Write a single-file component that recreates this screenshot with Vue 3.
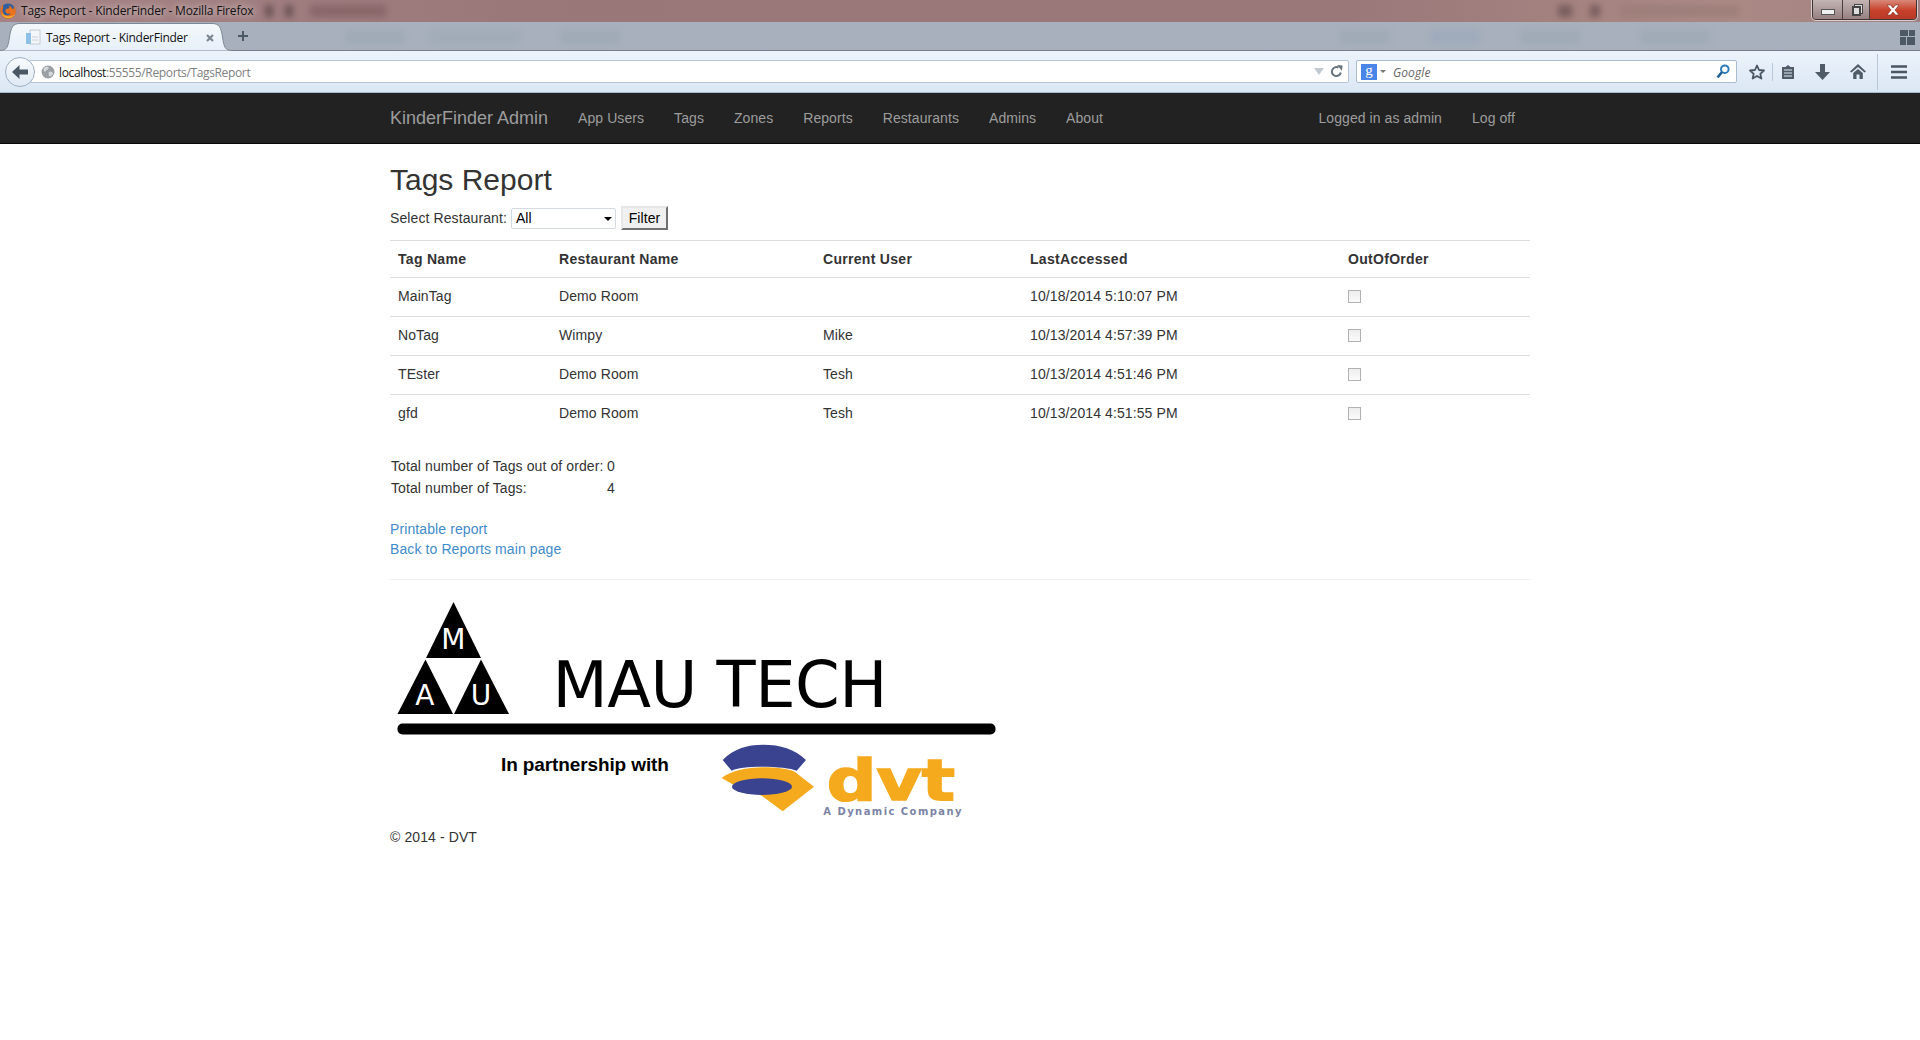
<script setup>
const navLinks = ['App Users', 'Tags', 'Zones', 'Reports', 'Restaurants', 'Admins', 'About']

const tags = [
  { name: 'MainTag', restaurant: 'Demo Room', user: '', accessed: '10/18/2014 5:10:07 PM' },
  { name: 'NoTag', restaurant: 'Wimpy', user: 'Mike', accessed: '10/13/2014 4:57:39 PM' },
  { name: 'TEster', restaurant: 'Demo Room', user: 'Tesh', accessed: '10/13/2014 4:51:46 PM' },
  { name: 'gfd', restaurant: 'Demo Room', user: 'Tesh', accessed: '10/13/2014 4:51:55 PM' },
]

// smudges of the windows showing through the aero glass
const titleBlurs = [
  { left: 265, width: 8, color: '#5f4a4c' },
  { left: 285, width: 8, color: '#5f4a4c' },
  { left: 310, width: 76, color: '#846365' },
  { left: 1558, width: 14, color: '#6f5556' },
  { left: 1590, width: 10, color: '#6f5556' },
  { left: 1620, width: 120, color: '#9c7d78' },
]
const tabBlurs = [
  { left: 345, width: 60, color: '#97a2b0' },
  { left: 430, width: 90, color: '#9aa5b3' },
  { left: 560, width: 60, color: '#97a2b0' },
  { left: 1340, width: 50, color: '#97a2b0' },
  { left: 1430, width: 50, color: '#94a3bd' },
  { left: 1520, width: 60, color: '#97a2b0' },
  { left: 1640, width: 70, color: '#97a2b0' },
]
</script>

<template>
  <div class="page">
    <!-- Firefox window chrome -->
    <div class="titlebar">
      <div
        v-for="b in titleBlurs"
        :key="b.left"
        class="blur"
        :style="{ left: b.left + 'px', width: b.width + 'px', background: b.color }"
      ></div>
      <svg class="ff-logo" width="16" height="16" viewBox="0 0 16 16">
        <circle cx="8" cy="8" r="7.5" fill="#2f5f9e" />
        <path d="M3 1.5 C1 3.5 0 6 .5 9 C1.2 13 4.5 16 8.5 15.8 C12.5 15.6 15.6 12.5 15.8 8.5 C15.9 6.5 15 4.5 13.8 3.2 C14 5 13.4 6 12.6 6.6 C12 4.6 10.5 3 8.5 2.6 C9.8 4 9.6 5 8.6 5.4 C6.6 5.2 5 6.4 5.4 8.2 C5.8 10.4 8.4 11.4 10.6 10.4 C9.6 12.4 6.6 13 4.4 11.4 C2.4 10 2 7 3.2 4.8 C3 3.6 2.9 2.6 3 1.5 Z" fill="#e8701f" />
        <path d="M1.2 10 C2.4 13.6 6 15.6 9.6 15 C12 14.6 14 13 15 11 C12.6 13.4 8.6 14 5.6 12.8 C3.6 12 2.2 11 1.2 10 Z" fill="#f6b32e" />
      </svg>
      <span class="title-text">Tags Report - KinderFinder - Mozilla Firefox</span>
      <div class="win-controls">
        <div class="win-btn min"><span class="min-glyph"></span></div>
        <div class="win-btn restore"><span class="restore-glyph"></span></div>
        <div class="win-btn close">
          <svg width="18" height="12" viewBox="0 0 18 12"><path d="M3 1 H6.5 L9 4 L11.5 1 H15 L11 6 L15 11 H11.5 L9 8 L6.5 11 H3 L7 6 Z" fill="#fff" stroke="#7a2a20" stroke-width=".6" /></svg>
        </div>
      </div>
    </div>

    <div class="tabstrip">
      <div
        v-for="b in tabBlurs"
        :key="b.left"
        class="blur"
        :style="{ left: b.left + 'px', width: b.width + 'px', background: b.color }"
      ></div>
      <div class="tab">
        <svg class="tab-shape" width="232" height="28" viewBox="0 0 232 28">
          <defs>
            <linearGradient id="tabfill" x1="0" y1="0" x2="0" y2="1">
              <stop offset="0" stop-color="#f4f8fc" />
              <stop offset="1" stop-color="#e6eff9" />
            </linearGradient>
          </defs>
          <path d="M0 27.5 C7 27.5 8 24 9.5 14 C11 4 13 .5 20 .5 H212 C219 .5 221 4 222.5 14 C224 24 225 27.5 232 27.5 V28 H0 Z" fill="url(#tabfill)" stroke="#7e8894" stroke-width="1" />
        </svg>
        <svg class="tab-icon" width="16" height="16" viewBox="0 0 16 16">
          <rect x="5" y="1" width="10" height="14" fill="#f4f7fa" stroke="#c4ccd4" />
          <rect x="1" y="4" width="5" height="11" fill="#8cc0e8" />
          <path d="M7 8 H13 M7 11 H13" stroke="#c9d0d8" />
        </svg>
        <span class="tab-label">Tags Report - KinderFinder</span>
        <svg class="tab-close" width="10" height="10" viewBox="0 0 10 10"><path d="M2 2 L8 8 M8 2 L2 8" stroke="#7c8792" stroke-width="2.2" /></svg>
      </div>
      <svg class="tab-plus" width="12" height="12" viewBox="0 0 12 12"><path d="M6 1 V11 M1 6 H11" stroke="#4c5a68" stroke-width="2" /></svg>
      <svg class="tab-groups" width="15" height="15" viewBox="0 0 15 15">
        <path d="M0 0 H8 V6 H0 Z M9 0 H15 V6 H9 Z M0 7 H6 V15 H0 Z M7 7 H15 V15 H7 Z" fill="#4d5a66" />
      </svg>
    </div>

    <div class="toolbar">
      <div class="back-btn">
        <svg width="16" height="14" viewBox="0 0 16 14"><path d="M7.5 0 L0 7 L7.5 14 V9.5 H16 V4.5 H7.5 Z" fill="#4a5866" /></svg>
      </div>
      <div class="urlbar">
        <svg class="globe" width="14" height="14" viewBox="0 0 14 14">
          <circle cx="7" cy="7" r="6.5" fill="#9a9fa5" />
          <path d="M3 3 C5 1 7 2 8 3 C7 5 5 5 4 7 C3 6 2 5 3 3 Z M8 7 C10 6 12 7 12 9 C11 11 9 12 8 11 C8 10 7 8 8 7 Z" fill="#d4d7da" />
        </svg>
        <span class="url"><span class="url-host">localhost</span>:55555/Reports/TagsReport</span>
        <span class="url-drop"></span>
        <svg class="url-reload" width="13" height="13" viewBox="0 0 13 13">
          <path d="M10.8 7.5 A4.5 4.5 0 1 1 8.5 2.6" fill="none" stroke="#66727e" stroke-width="2" />
          <path d="M7 0 L12.5 .5 L12 5.8 Z" fill="#66727e" />
        </svg>
      </div>
      <div class="searchbar">
        <span class="g-badge">g</span>
        <span class="g-arrow"></span>
        <span class="g-text">Google</span>
        <svg class="g-glass" width="14" height="15" viewBox="0 0 14 15">
          <circle cx="8.8" cy="5.2" r="3.8" fill="none" stroke="#2f7ab8" stroke-width="2" />
          <path d="M6 8 L1.5 13.5" stroke="#1f5f98" stroke-width="2.6" />
        </svg>
      </div>
      <div class="tool star">
        <svg width="16" height="16" viewBox="0 0 16 16"><path d="M8 1.5 L10 6 L15 6.5 L11.3 9.8 L12.4 14.6 L8 12 L3.6 14.6 L4.7 9.8 L1 6.5 L6 6 Z" fill="none" stroke="#4a5662" stroke-width="1.8" stroke-linejoin="round" /></svg>
      </div>
      <span class="tool-sep"></span>
      <div class="tool clip">
        <svg width="14" height="16" viewBox="0 0 14 16">
          <path d="M1 3 H4.5 L7 1 L9.5 3 H13 V15 H1 Z" fill="#4f5b67" />
          <path d="M3 6 H11 M3 9 H11 M3 12 H11" stroke="#e4edf6" />
        </svg>
      </div>
      <div class="tool down">
        <svg width="15" height="16" viewBox="0 0 15 16"><path d="M5 0 H10 V8 H15 L7.5 16 L0 8 H5 Z" fill="#4f5b67" /></svg>
      </div>
      <div class="tool home">
        <svg width="16" height="15" viewBox="0 0 16 15"><path d="M8 0 L16 7.5 L14.5 8.5 L8 3 L1.5 8.5 L0 7.5 Z M3.2 9 L8 5 L12.8 9 V15 H9.5 V10.5 H6.5 V15 H3.2 Z" fill="#4f5b67" /></svg>
      </div>
      <span class="tool-sep tall"></span>
      <div class="tool menu">
        <svg width="16" height="14" viewBox="0 0 16 14"><path d="M0 1.5 H16 M0 7 H16 M0 12.5 H16" stroke="#4a5662" stroke-width="2.4" /></svg>
      </div>
    </div>

    <!-- actual page -->
    <nav class="navbar">
      <div class="container nav-inner">
        <a class="brand">KinderFinder Admin</a>
        <a v-for="link in navLinks" :key="link" class="nav-link">{{ link }}</a>
        <a class="nav-link push">Logged in as admin</a>
        <a class="nav-link last">Log off</a>
      </div>
    </nav>

    <main class="container body">
      <h2>Tags Report</h2>
      <div class="filter-row">
        <label>Select Restaurant:</label>
        <div class="select-wrap">
          <select class="select"><option>All</option></select>
          <span class="select-arrow"></span>
        </div>
        <button class="filter-btn">Filter</button>
      </div>

      <table class="report">
        <colgroup>
          <col style="width: 161px" />
          <col style="width: 264px" />
          <col style="width: 207px" />
          <col style="width: 318px" />
          <col style="width: 190px" />
        </colgroup>
        <thead>
          <tr>
            <th>Tag Name</th>
            <th>Restaurant Name</th>
            <th>Current User</th>
            <th>LastAccessed</th>
            <th>OutOfOrder</th>
          </tr>
        </thead>
        <tbody>
          <tr v-for="t in tags" :key="t.name">
            <td>{{ t.name }}</td>
            <td>{{ t.restaurant }}</td>
            <td>{{ t.user }}</td>
            <td>{{ t.accessed }}</td>
            <td><input class="check" type="checkbox" disabled /></td>
          </tr>
        </tbody>
      </table>

      <div class="totals">
        <span>Total number of Tags out of order:</span><span>0</span>
        <span>Total number of Tags:</span><span>4</span>
      </div>

      <div class="links">
        <a>Printable report</a>
        <a>Back to Reports main page</a>
      </div>

      <hr />

      <svg class="logo" width="620" height="238" viewBox="0 0 620 238">
        <g fill="#000">
          <path d="M63.5 13 L91 69 H36 Z" />
          <path d="M35.5 70.5 L63 125 H7.5 Z" />
          <path d="M91 70.5 L119 125 H64 Z" />
          <rect x="7.5" y="134.5" width="598" height="11" rx="5" />
        </g>
        <g class="logo-letters" fill="#fff" font-size="28" text-anchor="middle">
          <text x="63.5" y="60">M</text>
          <text x="35" y="116">A</text>
          <text x="91" y="116">U</text>
        </g>
        <text class="logo-letters" x="162.5" y="118" font-size="64" textLength="335" fill="#000">MAU TECH</text>
        <text class="partner" x="111" y="181.5" font-size="19" textLength="168" fill="#000">In partnership with</text>
        <g transform="translate(310 145) scale(.3333)">
          <path d="M68 78 C100 45 140 32 190 32 C240 32 285 45 318 78 L290 110 C260 96 125 92 95 110 Z" fill="#3a4390" />
          <path d="M65 132 C90 112 140 100 190 100 C225 100 260 104 282 112 L342 158 L248 232 L185 185 L100 152 Z" fill="#f5aa1e" />
          <ellipse cx="186" cy="158" rx="90" ry="25" fill="#3a4390" />
          <text class="dvt" x="380" y="198" font-size="172" textLength="385" lengthAdjust="spacingAndGlyphs" fill="#f5aa1e" stroke="#f5aa1e" stroke-width="5">dvt</text>
          <text class="dvt-tag" x="370" y="243" font-size="30" textLength="415" fill="#7d83a5">A Dynamic Company</text>
        </g>
      </svg>

      <footer class="copy">© 2014 - DVT</footer>
    </main>
  </div>
</template>

<style scoped>
.page {
  font-family: "Liberation Sans", Arial, sans-serif;
  font-size: 14px;
  line-height: 20px;
  letter-spacing: 0.1px;
  color: #333;
  min-height: 1040px;
  background: #fff;
  overflow: hidden;
}

/* --- window chrome --- */
.titlebar {
  position: relative;
  height: 22px;
  display: flex;
  align-items: center;
  background: linear-gradient(to right, #a58385, #997678 30%, #9a7779 70%, #ab8a85 90%, #a08082);
  overflow: hidden;
}

.blur {
  position: absolute;
  top: 5px;
  height: 12px;
  filter: blur(3px);
  opacity: 0.8;
}

.ff-logo {
  flex: none;
  position: relative;
}

.title-text {
  position: relative;
  margin-left: 5px;
  font-family: "Open Sans", sans-serif;
  font-size: 12px;
  letter-spacing: -0.17px;
  color: #111;
  text-shadow: 0 0 6px #d4c2c2, 0 0 10px #d4c2c2;
}

.win-controls {
  position: absolute;
  top: -1px;
  right: 3px;
  width: 103px;
  height: 19px;
  display: flex;
  border: 1px solid #3f3434;
  border-radius: 0 0 4px 4px;
  box-shadow: 0 0 0 1px rgba(255, 255, 255, 0.6);
  overflow: hidden;
}

.win-btn {
  display: flex;
  align-items: center;
  justify-content: center;
  background: linear-gradient(to bottom, #c4b4b4, #968080);
}

.win-btn.min {
  width: 29px;
  border-right: 1px solid #4a3d3d;
}

.win-btn.restore {
  width: 26px;
  border-right: 1px solid #4a3d3d;
}

.win-btn.close {
  flex: 1;
  background: linear-gradient(to bottom, #d9897a, #c8402a 55%, #b83a28);
}

.min-glyph {
  width: 12px;
  height: 4px;
  margin-top: 4px;
  background: #f0f0f0;
  border: 1px solid #555;
}

.restore-glyph {
  width: 5px;
  height: 6px;
  margin-top: 2px;
  border: 2px solid #444;
  background: #ddd;
  box-shadow: 2px -2px 0 -1px #ddd, 2px -2px 0 0 #444;
}

.tabstrip {
  position: relative;
  height: 29px;
  display: flex;
  align-items: center;
  background: #a7b0bc;
  border-bottom: 1px solid #767f8b;
  box-sizing: border-box;
}

.tabstrip .blur {
  top: 8px;
  height: 14px;
  opacity: 0.4;
}

.tab {
  position: relative;
  width: 232px;
  height: 29px;
  display: flex;
  align-items: center;
  flex: none;
}

.tab-shape {
  position: absolute;
  left: 0;
  top: 1px;
}

.tab-icon {
  position: relative;
  margin-left: 25px;
  margin-top: 2px;
}

.tab-label {
  position: relative;
  margin-left: 5px;
  margin-top: 4px;
  font-family: "Open Sans", sans-serif;
  font-size: 12px;
  letter-spacing: -0.28px;
  color: #111;
}

.tab-close {
  position: absolute;
  left: 205px;
  top: 11px;
}

.tab-plus {
  position: relative;
  margin-left: 5px;
}

.tab-groups {
  position: absolute;
  right: 5px;
  top: 8px;
}

.toolbar {
  height: 42px;
  box-sizing: border-box;
  display: flex;
  align-items: center;
  background: linear-gradient(to bottom, #ecf3fb, #dbe7f4);
  border-bottom: 1px solid #a8bccf;
}

.back-btn {
  position: relative;
  z-index: 1;
  width: 30px;
  height: 30px;
  margin-left: 5px;
  flex: none;
  box-sizing: border-box;
  display: flex;
  align-items: center;
  justify-content: center;
  border: 1px solid #9eb0c2;
  border-radius: 50%;
  background: linear-gradient(to bottom, #f8fbfe, #dfe9f4);
}

.urlbar {
  flex: 1;
  height: 23px;
  margin-left: -6px;
  padding-left: 11px;
  display: flex;
  align-items: center;
  box-sizing: border-box;
  background: #fff;
  border: 1px solid #b5c5d5;
  border-radius: 2px;
}

.globe {
  flex: none;
}

.url {
  margin-left: 4px;
  margin-top: 2px;
  font-family: "Open Sans", sans-serif;
  font-size: 12px;
  letter-spacing: -0.36px;
  color: #808080;
  white-space: nowrap;
}

.url-host {
  color: #111;
}

.url-drop {
  margin-left: auto;
  width: 0;
  height: 0;
  border-left: 5px solid transparent;
  border-right: 5px solid transparent;
  border-top: 7px solid #c2c9d0;
}

.url-reload {
  margin: 0 5px 0 6px;
}

.searchbar {
  width: 381px;
  height: 23px;
  margin-left: 7px;
  flex: none;
  display: flex;
  align-items: center;
  box-sizing: border-box;
  padding: 0 6px 0 4px;
  background: #fff;
  border: 1px solid #a9bccf;
  border-radius: 2px;
}

.g-badge {
  width: 16px;
  height: 16px;
  background: #4a86e8;
  color: #fff;
  font-family: "Liberation Serif", serif;
  font-size: 15px;
  line-height: 13px;
  text-align: center;
}

.g-arrow {
  margin-left: 3px;
  width: 0;
  height: 0;
  border-left: 3px solid transparent;
  border-right: 3px solid transparent;
  border-top: 3px solid #777;
}

.g-text {
  margin-left: 7px;
  margin-top: 2px;
  font-family: "Open Sans", sans-serif;
  font-size: 12px;
  font-style: italic;
  color: #666;
}

.g-glass {
  margin-left: auto;
}

.tool {
  height: 20px;
  flex: none;
  display: flex;
  align-items: center;
  justify-content: center;
}

.tool.star {
  width: 31px;
  margin-left: 4px;
}

.tool-sep {
  width: 1px;
  height: 18px;
  flex: none;
  background: #b8c8d8;
}

.tool-sep.tall {
  height: 36px;
  margin-left: 3px;
}

.tool.clip {
  width: 29px;
}

.tool.down {
  width: 40px;
}

.tool.home {
  width: 32px;
}

.tool.menu {
  width: 42px;
}

/* --- bootstrap-ish page --- */
.container {
  width: 1140px;
  margin: 0 auto;
}

.navbar {
  height: 51px;
  box-sizing: border-box;
  background: #222;
  border-bottom: 1px solid #080808;
}

.nav-inner {
  display: flex;
  height: 50px;
  align-items: center;
}

.brand {
  font-size: 18px;
  letter-spacing: 0;
  color: #9d9d9d;
  padding-right: 15px;
}

.nav-link {
  padding: 0 15px;
  letter-spacing: 0.07px;
  color: #9d9d9d;
}

.nav-link.push {
  margin-left: auto;
}

h2 {
  margin: 19px 0 10px;
  font-size: 30px;
  font-weight: 500;
  line-height: 33px;
  letter-spacing: 0;
  color: #333;
}

.filter-row {
  display: flex;
  align-items: center;
  height: 24px;
  margin-bottom: 10px;
}

.select-wrap {
  position: relative;
  margin-left: 4px;
}

.select {
  display: block;
  width: 105px;
  height: 21px;
  padding: 0 0 0 4px;
  appearance: none;
  background: #fff;
  border: 1px solid #d5dae0;
  border-radius: 2px;
  font-family: inherit;
  font-size: 14px;
  color: #000;
}

.select-arrow {
  position: absolute;
  right: 4px;
  top: 9px;
  width: 0;
  height: 0;
  border-left: 4px solid transparent;
  border-right: 4px solid transparent;
  border-top: 4px solid #000;
}

.filter-btn {
  width: 47px;
  height: 24px;
  margin-left: 5px;
  padding: 0;
  background: #f0f0f0;
  border: 2px solid;
  border-color: #e6e6e6 #707070 #707070 #e6e6e6;
  font-family: inherit;
  font-size: 14px;
  letter-spacing: 0.1px;
  color: #000;
}

.report {
  width: 1140px;
  table-layout: fixed;
  border-collapse: collapse;
  margin-bottom: 22px;
}

.report th {
  height: 35px;
  padding: 0 8px 1px;
  text-align: left;
  font-weight: bold;
  letter-spacing: 0.3px;
  border-top: 1px solid #ddd;
  border-bottom: 1px solid #ddd;
}

.report td {
  height: 36px;
  padding: 0 8px 2px;
  border-top: 1px solid #ddd;
}

.report tbody tr:first-child td {
  border-top: none;
}

.check {
  display: block;
  appearance: none;
  width: 13px;
  height: 13px;
  margin: 0;
  background: linear-gradient(to bottom, #ededed, #fbfbfb);
  border: 1px solid #b1b1b1;
}

.totals {
  display: grid;
  grid-template-columns: 216px 1fr;
  grid-auto-rows: 22px;
  align-items: center;
  padding-left: 1px;
  margin-bottom: 20px;
}

.links {
  display: flex;
  flex-direction: column;
}

.links a {
  color: #428bca;
}

hr {
  margin: 20px 0 9px;
  border: 0;
  border-top: 1px solid #eee;
}

.logo {
  display: block;
}

.logo-letters {
  font-family: "DejaVu Sans", sans-serif;
}

.partner {
  font-family: "Liberation Sans", sans-serif;
  font-weight: bold;
}

.dvt {
  font-family: "DejaVu Sans", sans-serif;
  font-weight: bold;
}

.dvt-tag {
  font-family: "DejaVu Sans", sans-serif;
  font-weight: bold;
}

.copy {
  line-height: 20px;
}
</style>

<style>
html,
body {
  margin: 0;
  background: #fff;
}
</style>
